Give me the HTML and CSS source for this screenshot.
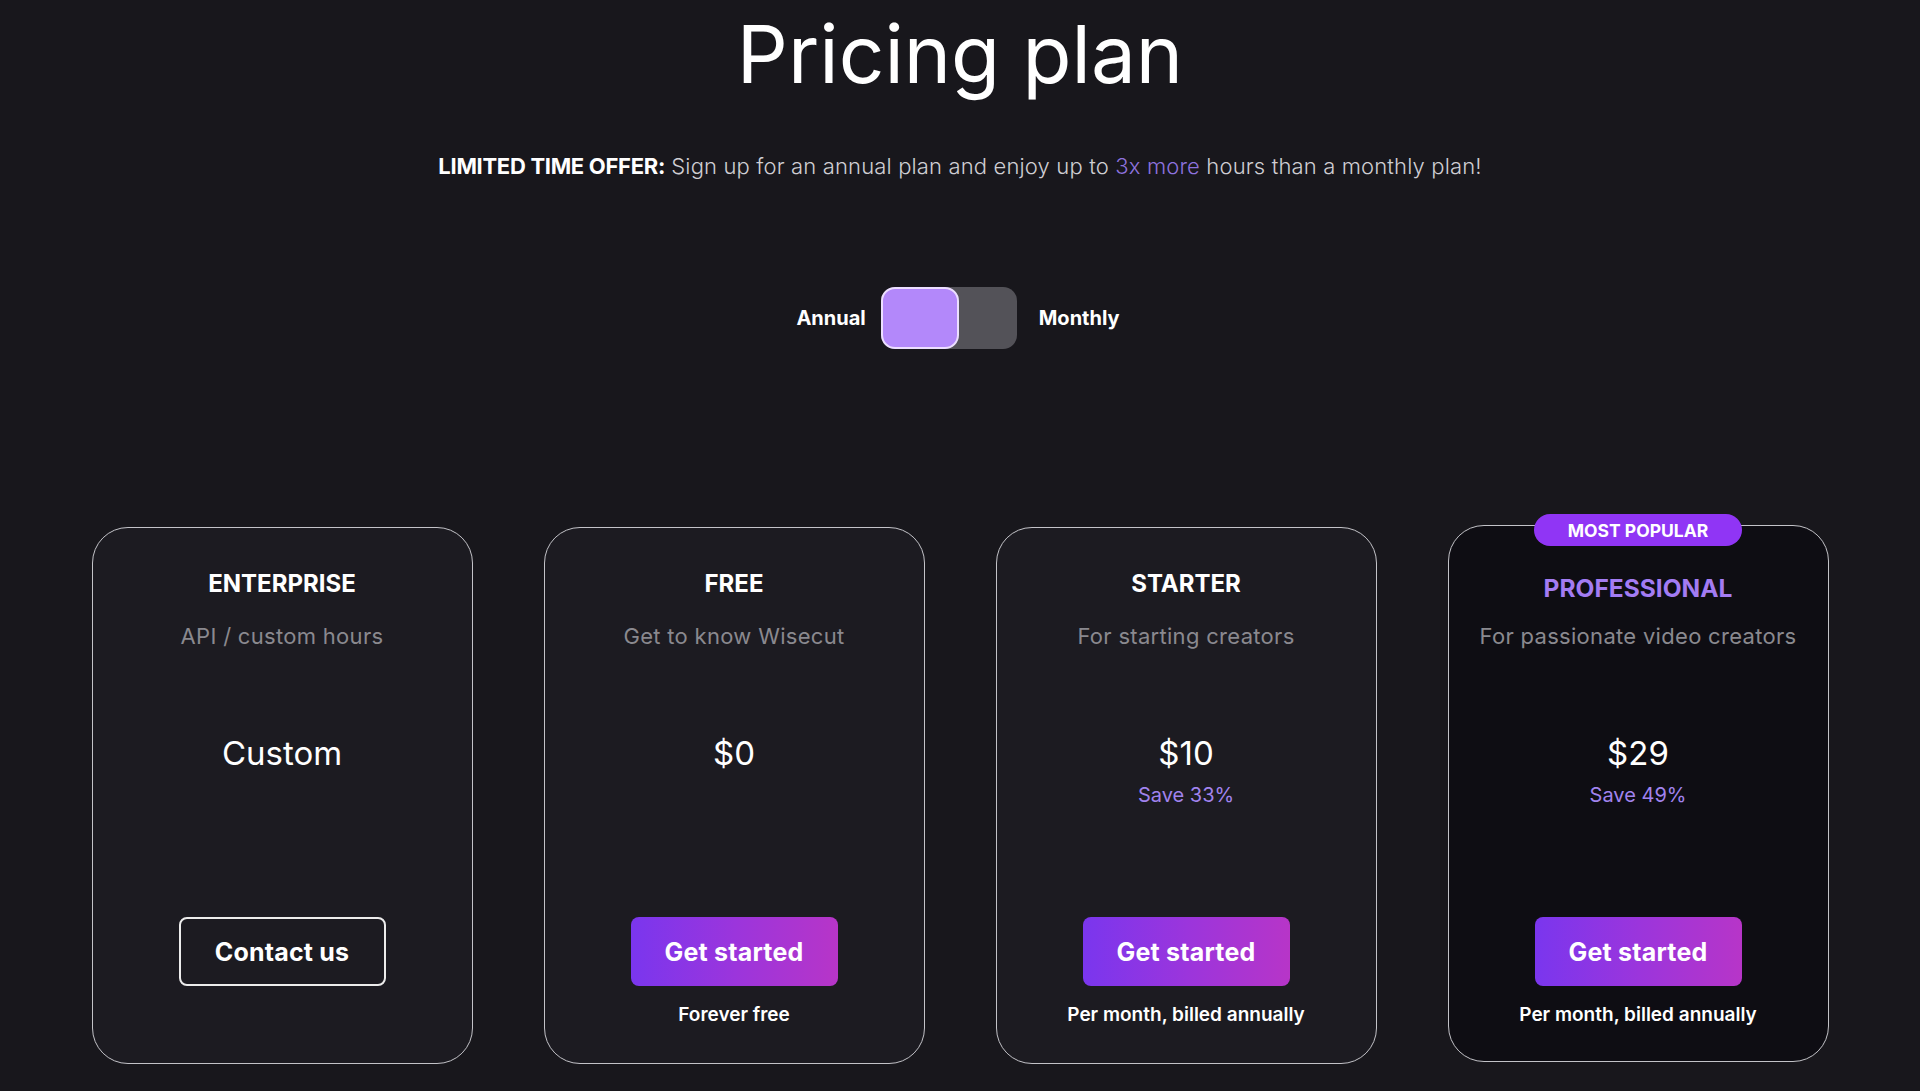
FILE: index.html
```html
<!DOCTYPE html>
<html lang="en">
<head>
<meta charset="utf-8">
<title>Pricing plan</title>
<link rel="stylesheet" href="styles.css">
</head>
<body>
<main class="page">
  <h1 class="title">Pricing plan</h1>
  <p class="offer"><strong>LIMITED TIME OFFER:</strong> Sign up for an annual plan and enjoy up to <span class="accent">3x more</span> hours than a monthly plan!</p>

  <div class="toggle-row">
    <span class="toggle-label">Annual</span>
    <div class="toggle"><div class="knob"></div></div>
    <span class="toggle-label monthly">Monthly</span>
  </div>

  <section class="cards">
    <article class="card">
      <h2 class="plan">ENTERPRISE</h2>
      <p class="desc">API / custom hours</p>
      <div class="price-block">
        <div class="price">Custom</div>
      </div>
      <a class="btn btn-outline">Contact us</a>
      <p class="note"></p>
    </article>

    <article class="card">
      <h2 class="plan">FREE</h2>
      <p class="desc">Get to know Wisecut</p>
      <div class="price-block">
        <div class="price">$0</div>
      </div>
      <a class="btn btn-grad">Get started</a>
      <p class="note">Forever free</p>
    </article>

    <article class="card">
      <h2 class="plan">STARTER</h2>
      <p class="desc">For starting creators</p>
      <div class="price-block">
        <div class="price">$10</div>
        <div class="save">Save 33%</div>
      </div>
      <a class="btn btn-grad">Get started</a>
      <p class="note">Per month, billed annually</p>
    </article>

    <article class="card card-pro">
      <span class="badge">MOST POPULAR</span>
      <h2 class="plan plan-pro">PROFESSIONAL</h2>
      <p class="desc">For passionate video creators</p>
      <div class="price-block">
        <div class="price">$29</div>
        <div class="save">Save 49%</div>
      </div>
      <a class="btn btn-grad">Get started</a>
      <p class="note">Per month, billed annually</p>
    </article>
  </section>
</main>
</body>
</html>
```

FILE: styles.css
```css
* { box-sizing: border-box; }

html, body {
  margin: 0;
  padding: 0;
  background: #18171c;
}

body {
  font-family: "Inter", "Noto Sans", "DejaVu Sans", sans-serif;
  color: #ffffff;
  min-height: 1091px;
}

.page {
  width: 1920px;
  padding-top: 14px;
  display: flex;
  flex-direction: column;
  align-items: center;
}

.title {
  margin: 0;
  font-size: 80px;
  line-height: 80px;
  font-weight: 400;
  color: #ffffff;
}

.offer {
  margin: 56px 0 0;
  font-size: 22px;
  line-height: 32px;
  font-weight: 300;
  letter-spacing: 0.15px;
  color: #cfced3;
}

.offer strong {
  font-weight: 700;
  color: #ffffff;
  letter-spacing: -0.3px;
}

.offer .accent {
  color: #8d72de;
}

.toggle-row {
  margin-top: 105px;
  margin-right: 4px;
  display: flex;
  align-items: center;
}

.toggle-label {
  font-size: 20px;
  font-weight: 700;
  color: #ffffff;
  margin-right: 15px;
}

.toggle-label.monthly {
  margin-right: 0;
  margin-left: 22px;
}

.toggle {
  width: 136px;
  height: 62px;
  border-radius: 14px;
  background: #535258;
  display: flex;
}

.knob {
  width: 78px;
  height: 62px;
  border-radius: 14px;
  background: #b388fa;
  border: 2px solid #ecdeff;
}

.cards {
  margin-top: 178px;
  display: flex;
  gap: 71px;
  justify-content: center;
}

.card {
  position: relative;
  width: 381px;
  height: 537px;
  border: 1.5px solid #c3c3c8;
  border-radius: 36px;
  background: #1c1b21;
  padding: 40px 10px 0;
  display: flex;
  flex-direction: column;
  align-items: center;
  text-align: center;
}

.card-pro {
  background: #0e0d13;
  margin-top: -2px;
}

.plan {
  margin: 0;
  font-size: 24px;
  line-height: 32px;
  font-weight: 700;
  color: #ffffff;
}

.plan-pro {
  color: #a37cf3;
  font-size: 24.5px;
  margin-top: 6px;
  margin-bottom: -4px;
}

.desc {
  margin: 21px 0 0;
  font-size: 22px;
  line-height: 30px;
  font-weight: 400;
  letter-spacing: 0.3px;
  color: #8a898f;
}

.price-block {
  margin-top: 80px;
  height: 186px;
  display: flex;
  flex-direction: column;
  align-items: center;
}

.price {
  font-size: 33px;
  line-height: 44px;
  font-weight: 400;
  color: #ffffff;
}

.save {
  margin-top: 5px;
  font-size: 20px;
  line-height: 30px;
  font-weight: 400;
  color: #a183ee;
}

.btn {
  width: 207px;
  height: 69px;
  border-radius: 8px;
  display: flex;
  align-items: center;
  justify-content: center;
  font-size: 25px;
  font-weight: 700;
  letter-spacing: 0.2px;
  color: #ffffff;
  text-decoration: none;
}

.btn-outline {
  border: 2px solid #ececec;
  background: transparent;
}

.btn-grad {
  background: linear-gradient(90deg, #7a36ee 0%, #9b35dc 50%, #b735c8 100%);
}

.note {
  margin: 16px 0 0;
  font-size: 19px;
  line-height: 26px;
  font-weight: 600;
  color: #ffffff;
}

.badge {
  position: absolute;
  top: -12px;
  left: 50%;
  transform: translateX(-50%);
  width: 208px;
  height: 32px;
  border-radius: 16px;
  background: #9035f5;
  color: #ffffff;
  font-size: 17.5px;
  font-weight: 700;
  display: flex;
  align-items: center;
  justify-content: center;
}
```
